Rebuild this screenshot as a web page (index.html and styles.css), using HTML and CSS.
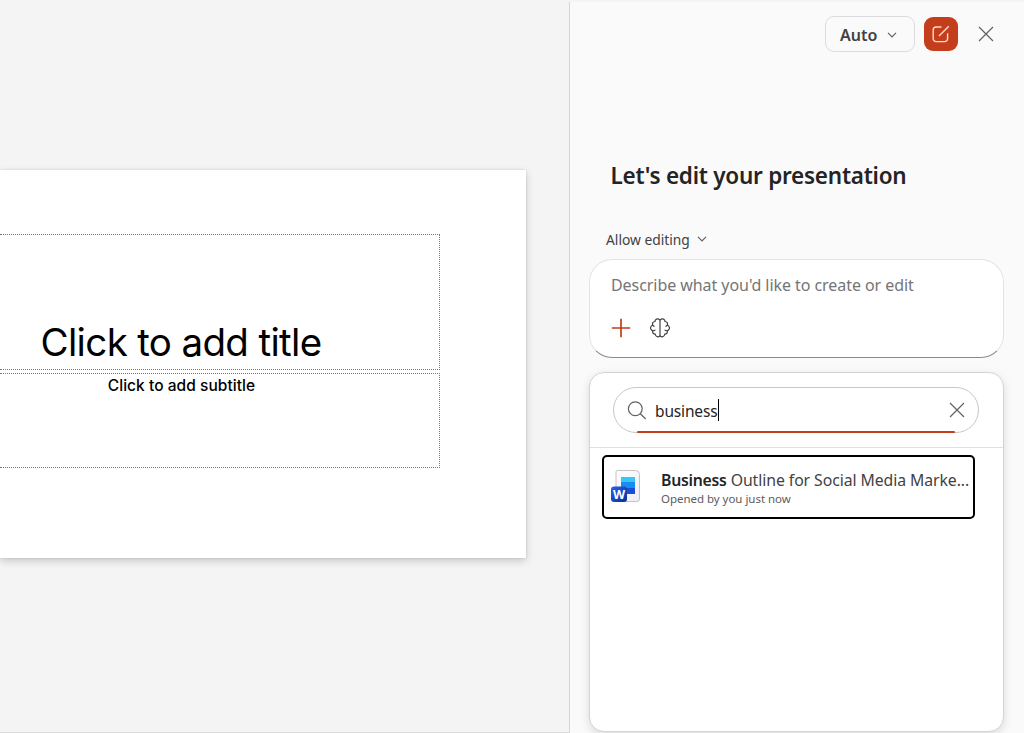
FILE: index.html
```html
<!DOCTYPE html>
<html lang="en">
<head>
    <meta charset="UTF-8" />
    <meta name="viewport" content="width=device-width, initial-scale=1.0" />
    <title>Presentation</title>
    <link rel="stylesheet" href="styles.css">
</head>
<body>
    <main class="editor">
        <div class="slide">
            <div class="placeholder title"><span>Click to add title</span></div>
            <div class="placeholder subtitle"><span>Click to add subtitle</span></div>
        </div>
    </main>

    <aside class="panel">
        <header class="toolbar">
            <button class="mode">
                <span>Auto</span>
                <svg width="10" height="6" viewBox="0 0 10 6"><path d="M1 .8 5 4.8 9 .8" /></svg>
            </button>
            <button class="new-chat" aria-label="New chat">
                <svg width="18" height="18" viewBox="0 0 18 18"><path d="M9.5 2H4.2A3 3 0 0 0 1.2 5v8.6a3 3 0 0 0 3 3h8.4a3 3 0 0 0 3-3V8.3M7 11 16.8 1.2" /></svg>
            </button>
            <button class="close" aria-label="Close">
                <svg width="16" height="16" viewBox="0 0 16 16"><path d="M1 1 15 15M15 1 1 15" /></svg>
            </button>
        </header>

        <h1>Let's edit your presentation</h1>

        <button class="permission">
            <span>Allow editing</span>
            <svg width="10" height="6" viewBox="0 0 10 6"><path d="M1 .8 5 4.8 9 .8" /></svg>
        </button>

        <div class="prompt">
            <p>Describe what you'd like to create or edit</p>
            <div class="prompt-tools">
                <svg class="plus" width="20" height="20" viewBox="0 0 20 20"><path d="M10 .8v18.4M.8 10h18.4" /></svg>
                <svg class="brain" width="20" height="20" viewBox="0 0 20 20">
                    <path d="M10 2.2v15.6M10 2.4C9.4.7 7 .3 5.9 1.5 5.2 2 5 2.8 5 3.5 3 3.6 2 5.2 2.7 7 .9 7.9.1 9.7.9 11.2 1.3 12.1 2 12.6 2.8 12.7 2.2 14.6 3.3 16.2 5.2 16.2 5.4 18.6 9 19.9 10 17.6" />
                    <path d="M10 2.4C10.6.7 13 .3 14.1 1.5 14.8 2 15 2.8 15 3.5 17 3.6 18 5.2 17.3 7 19.1 7.9 19.9 9.7 19.1 11.2 18.7 12.1 18 12.6 17.2 12.7 17.8 14.6 16.7 16.2 14.8 16.2 14.6 18.6 11 19.9 10 17.6" />
                    <path d="M2.7 7Q3.2 8.3 4.6 8.4M17.3 7Q16.8 8.3 15.4 8.4M2.8 12.7Q4.5 13 5.3 11.7M17.2 12.7Q15.5 13 14.7 11.7" />
                </svg>
            </div>
        </div>

        <section class="picker">
            <div class="picker-head">
                <div class="search">
                    <svg width="20" height="20" viewBox="0 0 20 20"><circle cx="8.3" cy="8.8" r="6.9" /><path d="M13.3 13.8 18.7 19" /></svg>
                    <span class="query">business</span>
                    <span class="caret"></span>
                    <svg class="clear" width="16" height="16" viewBox="0 0 16 16"><path d="M1 1 15 15M15 1 1 15" /></svg>
                </div>
            </div>
            <div class="result">
                <svg class="word" width="30" height="34" viewBox="0 0 30 34">
                    <defs>
                        <linearGradient id="page" x1="0" y1="0" x2="1" y2="1">
                            <stop offset="0" stop-color="#ffffff" />
                            <stop offset="1" stop-color="#eeeef5" />
                        </linearGradient>
                        <linearGradient id="badge" x1="0" y1="0" x2="1" y2="1">
                            <stop offset="0" stop-color="#2464e8" />
                            <stop offset="1" stop-color="#0b2d9c" />
                        </linearGradient>
                    </defs>
                    <path class="sheet" fill="url(#page)" d="M6.5 1.5h18q4 0 4 4v24.5a2.500 2.500 0 0 1-2.500 2.500H6.5a1.500 1.500 0 0 1-1.500-1.500V3a1.500 1.500 0 0 1 1.500-1.500z" />
                    <path fill="#38c6f7" d="M10 8h14v6H10z" />
                    <path fill="#1a8cf0" d="M10 13h14v6H10z" />
                    <path fill="#184fd6" d="M10 19h14v6H10z" />
                    <rect x="0" y="17.5" width="16" height="15.5" rx="3" fill="url(#badge)" />
                    <text x="8" y="29.8">W</text>
                </svg>
                <div class="result-text">
                    <p class="name"><b>Business</b> Outline for Social Media Marke...</p>
                    <p class="meta">Opened by you just now</p>
                </div>
            </div>
        </section>
    </aside>
</body>
</html>
```
FILE: styles.css
```css
* {
    box-sizing: border-box;
}

body {
    display: flex;
    margin: 0;
    height: 733px;
    overflow: hidden;
    font-family: "Noto Sans", sans-serif;
    color: #242424;
    background: #f4f4f4;
}

h1, p {
    margin: 0;
    white-space: nowrap;
}

button {
    display: flex;
    align-items: center;
    padding: 0;
    border: none;
    background: transparent;
    font-family: inherit;
    color: inherit;
}

svg {
    display: block;
    flex: none;
    fill: none;
    stroke: #616161;
    stroke-width: 1.2;
}

/* slide area */
.editor {
    width: 569px;
    padding-top: 170px;
    border-bottom: 1px solid #dcdcdc;
}

.slide {
    display: flex;
    flex-direction: column;
    gap: 3px;
    width: 526px;
    height: 388px;
    padding-top: 64px;
    background: #fff;
    box-shadow: 0 3px 8px rgba(0, 0, 0, 0.18), 0 0 2px rgba(0, 0, 0, 0.12);
    font-family: Inter, sans-serif;
    color: #000;
}

.placeholder {
    display: flex;
    justify-content: center;
    width: 440px;
    border: 1px dotted #777;
    border-left: none;
    white-space: nowrap;
}

.title {
    align-items: flex-end;
    height: 136px;
    padding: 0 77px 4px 0;
    font-size: 38.5px;
    line-height: 46px;
    letter-spacing: -0.65px;
}

.subtitle {
    height: 95px;
    padding: 2px 76px 0 0;
    font-size: 15.5px;
    font-weight: 500;
    line-height: 20px;
    letter-spacing: 0.05px;
}

/* copilot panel */
.panel {
    display: flex;
    flex-direction: column;
    width: 455px;
    margin-top: 2px;
    padding: 14px 20px 0 19px;
    border-left: 1px solid #d6d6d6;
    background: #fafafa;
}

.toolbar {
    display: flex;
    justify-content: flex-end;
    align-items: center;
    height: 36px;
    padding-right: 10px;
}

.mode {
    justify-content: space-between;
    width: 90px;
    height: 36px;
    padding: 2px 17px 0 14px;
    border: 1px solid #dcdcdc;
    border-radius: 9px;
    font-size: 16px;
    font-weight: 600;
    color: #424242;
}

.new-chat {
    justify-content: center;
    width: 34px;
    height: 34px;
    margin-left: 9px;
    border-radius: 9px;
    background: #c43e1c;
}

.new-chat svg {
    stroke: #ffd9cc;
    stroke-width: 1.4;
}

.close {
    margin-left: 20px;
}

h1 {
    margin: 107px 0 0 21.5px;
    font-size: 22.5px;
    font-weight: 600;
    line-height: 34px;
    letter-spacing: -0.25px;
}

.permission {
    gap: 7px;
    height: 20px;
    margin: 36px 0 0 17px;
    font-size: 13.8px;
    color: #424242;
}

.prompt {
    width: 415px;
    height: 99px;
    margin-top: 10px;
    padding: 14px 21px 0;
    border: 1px solid #e3e3e3;
    border-bottom-color: #8a8a8a;
    border-radius: 23px;
    background: #fff;
}

.prompt p {
    font-size: 16px;
    line-height: 22px;
    letter-spacing: -0.06px;
    color: #757575;
}

.prompt-tools {
    display: flex;
    gap: 19px;
    margin-top: 22px;
}

.plus {
    stroke: #c43e1c;
    stroke-width: 1.7;
}

.brain {
    stroke: #424242;
}

.picker {
    width: 415px;
    height: 360px;
    margin-top: 14px;
    border: 1px solid #d4d4d4;
    border-radius: 15px;
    background: #fff;
    box-shadow: 0 3px 10px rgba(0, 0, 0, 0.13);
}

.picker-head {
    height: 75px;
    padding: 14px 0 0 23px;
    border-bottom: 1px solid #e0e0e0;
}

.search {
    position: relative;
    display: flex;
    align-items: center;
    width: 366px;
    height: 46px;
    padding: 0 13px 0 13px;
    border: 1px solid #c7c7c7;
    border-radius: 23px;
}

/* focus underline */
.search::after {
    content: "";
    position: absolute;
    left: 23px;
    right: 23px;
    bottom: -1px;
    height: 2px;
    border-radius: 1px;
    background: #c43e1c;
}

.query {
    margin: 2px 0 0 8px;
    font-size: 15.5px;
    letter-spacing: -0.15px;
}

.caret {
    width: 1px;
    height: 22px;
    background: #000;
}

.clear {
    margin-left: auto;
}

.result {
    display: flex;
    align-items: center;
    width: 373px;
    height: 64px;
    margin: 7px 0 0 12px;
    padding: 0 0 2px 7px;
    border: 2px solid #000;
    border-radius: 5px;
}

.word {
    stroke: none;
}

.sheet {
    stroke: #b5b5b5;
    stroke-width: 0.8;
}

.word text {
    fill: #fff;
    font-size: 12.5px;
    font-weight: 700;
    text-anchor: middle;
}

.result-text {
    margin: 4px 0 0 20px;
}

.name {
    font-size: 15.8px;
    line-height: 20px;
    letter-spacing: -0.08px;
    color: #424242;
}

.name b {
    font-weight: 600;
    letter-spacing: -0.25px;
    color: #242424;
}

.meta {
    font-size: 11.5px;
    line-height: 17px;
    letter-spacing: -0.03px;
    color: #5c5c5c;
}
```
